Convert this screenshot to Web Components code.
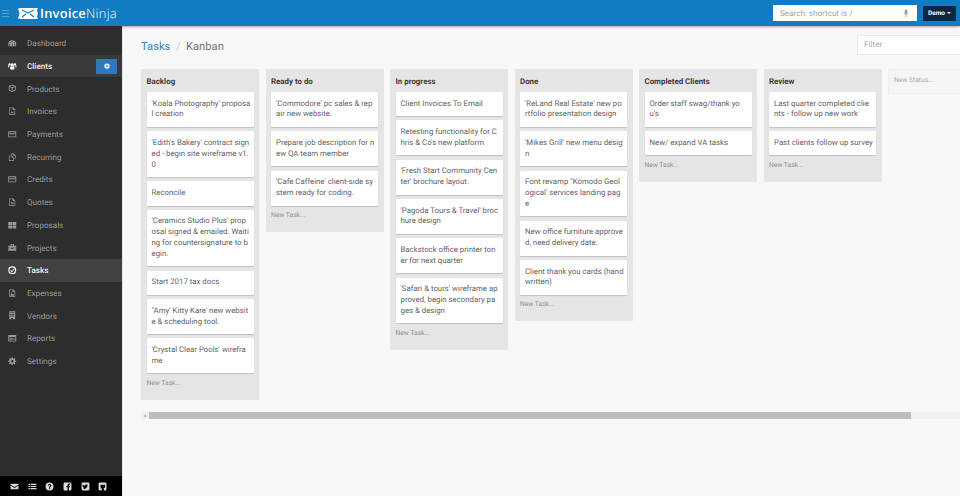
<!DOCTYPE html>
<html lang="en">
<head>
<meta charset="utf-8">
<title>Tasks / Kanban</title>
<style>
  html, body { margin: 0; height: 100%; overflow: hidden; }
  body { font-family: Roboto, "Liberation Sans", sans-serif; background: #f8f8f8; text-rendering: geometricPrecision; }
</style>
</head>
<body>
<app-shell>
  <app-header slot="header"></app-header>
  <side-nav slot="nav">
    <nav-item icon="dashboard">Dashboard</nav-item>
    <nav-item icon="clients" active add>Clients</nav-item>
    <nav-item icon="products">Products</nav-item>
    <nav-item icon="invoices">Invoices</nav-item>
    <nav-item icon="card">Payments</nav-item>
    <nav-item icon="recurring">Recurring</nav-item>
    <nav-item icon="card">Credits</nav-item>
    <nav-item icon="quotes">Quotes</nav-item>
    <nav-item icon="proposals">Proposals</nav-item>
    <nav-item icon="projects">Projects</nav-item>
    <nav-item icon="tasks" current>Tasks</nav-item>
    <nav-item icon="expenses">Expenses</nav-item>
    <nav-item icon="vendors">Vendors</nav-item>
    <nav-item icon="reports">Reports</nav-item>
    <nav-item icon="settings">Settings</nav-item>
  </side-nav>
  <kanban-page>
    <kanban-column name="Backlog">
      <task-card>'Koala Photography' proposa<br>l creation</task-card>
      <task-card>'Edith's Bakery' contract sign<br>ed - begin site wireframe v1.<br>0</task-card>
      <task-card>Reconcile</task-card>
      <task-card>'Ceramics Studio Plus' prop<br>osal signed &amp; emailed. Waiti<br>ng for countersignature to b<br>egin.</task-card>
      <task-card>Start 2017 tax docs</task-card>
      <task-card>"Amy' Kitty Kare' new websit<br>e &amp; scheduling tool.</task-card>
      <task-card>'Crystal Clear Pools' wirefra<br>me</task-card>
    </kanban-column>
    <kanban-column name="Ready to do">
      <task-card>'Commodore' pc sales &amp; rep<br>air new website.</task-card>
      <task-card>Prepare job description for n<br>ew QA team member</task-card>
      <task-card>'Cafe Caffeine' client-side sy<br>stem ready for coding.</task-card>
    </kanban-column>
    <kanban-column name="In progress">
      <task-card>Client Invoices To Email</task-card>
      <task-card>Retesting functionality for C<br>hris &amp; Co's new platform</task-card>
      <task-card>'Fresh Start Community Cen<br>ter' brochure layout.</task-card>
      <task-card>'Pagoda Tours &amp; Travel' broc<br>hure design</task-card>
      <task-card>Backstock office printer ton<br>er for next quarter</task-card>
      <task-card>'Safari &amp; tours' wireframe ap<br>proved, begin secondary pa<br>ges &amp; design</task-card>
    </kanban-column>
    <kanban-column name="Done">
      <task-card>'ReLand Real Estate' new po<br>rtfolio presentation design</task-card>
      <task-card>'Mikes Grill' new menu desig<br>n</task-card>
      <task-card>Font revamp "Komodo Geol<br>ogical' services landing pag<br>e</task-card>
      <task-card>New office furniture approve<br>d, need delivery date.</task-card>
      <task-card>Client thank you cards (hand<br>written)</task-card>
    </kanban-column>
    <kanban-column name="Completed Clients">
      <task-card>Order staff swag/thank yo<br>u's</task-card>
      <task-card>New/ expand VA tasks</task-card>
    </kanban-column>
    <kanban-column name="Review">
      <task-card>Last quarter completed clie<br>nts - follow up new work</task-card>
      <task-card>Past clients follow up survey</task-card>
    </kanban-column>
    <new-status></new-status>
  </kanban-page>
</app-shell>

<script>
// icon paths, drawn on a 16x16 box
const ICONS = {
  dashboard: '<path d="M8 2.500a7.500 7.500 0 0 0-7.500 7.500c0 1.300.3 2.500.9 3.500h13.200c.6-1 .9-2.200.9-3.500A7.500 7.500 0 0 0 8 2.500zM8 4a1 1 0 1 1 0 2 1 1 0 0 1 0-2zM4 6a1 1 0 1 1 0 2 1 1 0 0 1 0-2zM12 6a1 1 0 1 1 0 2 1 1 0 0 1 0-2zM3 10a1 1 0 1 1 0 2 1 1 0 0 1 0-2zM13 10a1 1 0 1 1 0 2 1 1 0 0 1 0-2zM7.200 12.500l.8-5 .8 5z" fill-rule="evenodd"/>',
  clients: '<circle cx="8" cy="5.500" r="3"/><circle cx="3" cy="4.500" r="2.200"/><circle cx="13" cy="4.500" r="2.200"/><path d="M4 10c0-1.200.9-2 1.800-2 .6.500 1.400.9 2.200.9s1.600-.4 2.200-.9c.9 0 1.800.8 1.800 2v2.800c0 .7-.5 1.200-1.200 1.200H5.200c-.7 0-1.200-.5-1.200-1.200z"/><path d="M0 7.300c0-.6.500-1 1-1 .6.500 1.300.7 2 .6-.2.400-.3 1-.4 1.300-.5.300-.9 1-1.100 1.800H1c-.6 0-1-.4-1-1zM16 7.300c0-.6-.5-1-1-1-.6.500-1.300.7-2 .6.200.4.300 1 .4 1.300.5.300.9 1 1.100 1.800h.5c.6 0 1-.4 1-1z"/>',
  products: '<path d="M8 1 14.500 3.800v8.400L8 15l-6.500-2.800V3.800zM8 2.800 4 4.400 8 6l4-1.600zM3 5.800v5.400l4.200 1.800V7.500zM8.800 7.500V13l4.200-1.800V5.800z" fill-rule="evenodd"/>',
  invoices: '<path d="M2.500 1h7.500l3.500 3.500V15h-11zM3.800 2.300v11.400h8.400V5.500H9V2.300zM10.200 2.800v1.500h1.500zM6 7h1.500c.2 1.700.8 2.800 1.700 3.500.6 0 1.400 0 1.600.4v.6c-.7.200-1.600 0-2.300-.4-.8.100-1.600.4-2.300.7-.4.700-.9 1.200-1.300 1-.5-.2 0-1.200 1.200-1.700.4-.7.700-1.400.9-2.200-.4-.8-.6-1.400 0-1.900z" fill-rule="evenodd"/>',
  card: '<path d="M.5 2.500h15v11H.5zM2 4v2h12V4zM2 8v4h12V8z" fill-rule="evenodd"/>',
  recurring: '<path d="M6 1h5l3.500 3.500v6H11V15H1.500V5H6zM7.300 2.300v3.200h1.200L11 8v1.300h2.200V5.200H10V2.300zM2.800 6.300v7.500h6.900V8.500H7V6.300z" fill-rule="evenodd"/>',
  quotes: '<path d="M2.500 1h7.500l3.500 3.500V15h-11zM3.800 2.300v11.400h8.400V5.500H9V2.300zM5.500 8h5v1.200h-5zM5.500 10.500h5v1.200h-5zM10.200 2.800v1.500h1.500z" fill-rule="evenodd"/>',
  proposals: '<path d="M.5 2h7v5.500h-7zM8.500 2h7v5.500h-7zM.5 8.500h7V14h-7zM8.500 8.500h7V14h-7z"/>',
  projects: '<path d="M5 2h6v3h4.500v3.800H.5V5H5zM6.500 3.400V5h3V3.400zM.5 9.800h6v1.400h3V9.800h6V14.500H.5z" fill-rule="evenodd"/>',
  tasks: '<path d="M8 .5a7.500 7.500 0 1 1 0 15 7.500 7.500 0 0 1 0-15zm0 2.200a5.300 5.300 0 1 0 0 10.600A5.300 5.300 0 0 0 8 2.700zm3.500 2.500 1.100 1.100L7.300 11.600 4.500 8.800l1.100-1.100 1.700 1.700z" fill-rule="evenodd"/>',
  expenses: '<path d="M2.500 1h7.500l3.500 3.500V15h-11zM3.800 2.300v11.400h8.400V5.500H9V2.300zM5 12.500V10l1.800-1.600 1.600 1.600 1-.9 1.600 1.400v2zM6 6a1 1 0 1 1 0 2 1 1 0 0 1 0-2z" fill-rule="evenodd"/>',
  vendors: '<path d="M2.500 .5h11v15H9.500v-2.500h-3v2.500h-4zM4.500 2.500v1.800h1.800V2.500zM7.100 2.500v1.800h1.800V2.500zM9.700 2.500v1.800h1.800V2.500zM4.500 5.500v1.800h1.800V5.500zM7.100 5.500v1.800h1.800V5.500zM9.700 5.500v1.800h1.800V5.500zM4.500 8.500v1.800h1.800V8.500zM7.100 8.500v1.800h1.800V8.500zM9.700 8.500v1.800h1.800V8.500z" fill-rule="evenodd"/>',
  reports: '<path d="M.5 2h15v12H.5zM2 5.500v1.900h3.200V5.500zM6.200 5.500v1.900H14V5.500zM2 8.400v1.800h3.200V8.400zM6.200 8.400v1.800H14V8.400zM2 11.200v1.300h3.200v-1.300zM6.200 11.200v1.300H14v-1.300z" fill-rule="evenodd"/>',
  settings: '<path d="M7 .5h2l.4 2.200 1.400.6 1.800-1.300 1.400 1.400-1.300 1.800.6 1.400 2.200.4v2l-2.200.4-.6 1.400 1.300 1.800-1.400 1.400-1.800-1.300-1.400.6L9 15.500H7l-.4-2.200-1.400-.6-1.800 1.300L2 12.600l1.300-1.800-.6-1.400L.5 9V7l2.200-.4.6-1.400L2 3.400 3.400 2l1.800 1.300 1.400-.6zM8 5.800a2.200 2.200 0 1 0 0 4.400 2.200 2.200 0 0 0 0-4.400z" fill-rule="evenodd"/>',
  mail: '<path d="M1 3h14v1.800L8 9 1 4.800zM1 6.300l7 4.200 7-4.200V13H1z"/>',
  list: '<path d="M1 3h2.500v2.200H1zM4.500 3H15v2.200H4.500zM1 6.900h2.500v2.200H1zM4.500 6.900H15v2.200H4.500zM1 10.800h2.500V13H1zM4.500 10.800H15V13H4.500z"/>',
  help: '<path d="M8 1a7 7 0 1 1 0 14A7 7 0 0 1 8 1zM7 11v2h2v-2zM8 3.500c-1.700 0-2.800 1-3 2.500l1.800.3c.1-.7.500-1.100 1.200-1.100s1.100.4 1.100.9c0 1.100-2.100 1.100-2.100 3.400V10h2v-.3c0-1.300 2.100-1.500 2.100-3.700 0-1.500-1.300-2.500-3.100-2.500z" fill-rule="evenodd"/>',
  facebook: '<path d="M3 1h10a2 2 0 0 1 2 2v10a2 2 0 0 1-2 2h-2.500V9.500h2l.3-2.300h-2.300V5.800c0-.7.200-1.100 1.100-1.100h1.300V2.600c-.3 0-1-.1-1.800-.1-1.800 0-3 1.100-3 3.100v1.600h-2v2.300h2V15H3a2 2 0 0 1-2-2V3a2 2 0 0 1 2-2z"/>',
  twitter: '<path d="M3 1h10a2 2 0 0 1 2 2v10a2 2 0 0 1-2 2H3a2 2 0 0 1-2-2V3a2 2 0 0 1 2-2zm9.500 4.200c-.4.200-.8.300-1.200.3.400-.3.800-.7.900-1.200-.4.200-.9.400-1.300.5a2.100 2.100 0 0 0-3.600 1.900c-1.700-.1-3.200-.9-4.300-2.200-.6 1-.3 2.200.6 2.800-.3 0-.7-.1-1-.3 0 1 .7 1.900 1.700 2.100-.3.100-.6.100-.9 0 .3.900 1.100 1.400 2 1.500-.9.700-2 1-3 .9 3.800 2.200 9-.1 8.900-5.200.5-.3.900-.7 1.200-1.100z" fill-rule="evenodd"/>',
  github: '<path d="M3 1h10a2 2 0 0 1 2 2v10a2 2 0 0 1-2 2h-2.600v-2.500c0-.7-.2-1.100-.5-1.400 1.600-.2 2.900-.9 2.900-3.100 0-.7-.2-1.200-.6-1.700.1-.3.200-.9-.1-1.700-.5-.1-1.300.3-1.800.7a7 7 0 0 0-3.600 0c-.5-.4-1.300-.8-1.800-.7-.3.800-.2 1.400-.1 1.700-.4.500-.6 1-.6 1.700 0 2.200 1.300 2.900 2.900 3.100-.2.200-.4.500-.5.900-.6.300-1.500.3-1.900-.6-.3-.4-.7-.5-1-.4.500.4.600 1.500 2.900 1.300V15H3a2 2 0 0 1-2-2V3a2 2 0 0 1 2-2z"/>',
  mic: '<path d="M8 1a2.500 2.500 0 0 1 2.500 2.500v4a2.500 2.500 0 0 1-5 0v-4A2.500 2.500 0 0 1 8 1zM3.500 6.500h1v1a3.500 3.500 0 0 0 7 0v-1h1v1a4.500 4.500 0 0 1-4 4.500v1.800h2V15h-5v-1.200h2V12a4.500 4.500 0 0 1-4-4.500z"/>',
  plus: '<path d="M8 1a7 7 0 1 1 0 14A7 7 0 0 1 8 1zM7 4v3H4v2h3v3h2V9h3V7H9V4z" fill-rule="evenodd"/>'
};
const icon = (name, size) =>
  `<svg viewBox="0 0 16 16" width="${size}" height="${size}" fill="currentColor" aria-hidden="true">${ICONS[name]}</svg>`;

class AppShell extends HTMLElement {
  connectedCallback() {
    this.attachShadow({ mode: 'open' });
    this.shadowRoot.innerHTML = `
      <style>
        :host { display: grid; grid-template-columns: 122px 1fr; grid-template-rows: 26px 1fr; height: 496px; overflow: hidden; }
        .top { grid-column: 1 / 3; position: relative; z-index: 2; }
        .main { min-width: 0; overflow: hidden; border-left: 1px solid #e6e6e6; }
      </style>
      <div class="top"><slot name="header"></slot></div>
      <slot name="nav"></slot>
      <div class="main"><slot></slot></div>
    `;
  }
}

class AppHeader extends HTMLElement {
  connectedCallback() {
    this.attachShadow({ mode: 'open' });
    this.shadowRoot.innerHTML = `
      <style>
        :host { display: flex; align-items: center; height: 26px; background: #117cc1; box-shadow: 0 1px 2px rgba(60,40,30,.4); padding: 0 4px 0 2px; }
        .burger { width: 7px; height: 7px; margin-right: 9px; border-top: 1px solid #5f9fb8; border-bottom: 1px solid #5f9fb8; position: relative; box-sizing: border-box; }
        .burger::after { content: ""; position: absolute; left: 0; right: 0; top: 2px; height: 1px; background: #5f9fb8; }
        .logo { display: flex; align-items: center; gap: 2px; color: #fff; flex: 1; font: 12.900px/26px "Open Sans", sans-serif; letter-spacing: .25px; }
        .logo b { font-weight: 600; }
        .logo span { font-weight: 300; }
        .search { width: 144px; height: 16px; box-sizing: border-box; background: #fff; display: flex; align-items: center; justify-content: space-between; padding: 0 7px; color: #a2a2a2; font: 8.100px Roboto, sans-serif; margin-right: 6px; }
        .search svg { color: #999; }
        .demo { width: 33px; height: 15px; background: #0b2742; color: #fff; border-radius: 1px; display: flex; align-items: center; justify-content: center; gap: 2px; font: 700 6.500px Roboto, sans-serif; }
        .demo i { border: 2px solid transparent; border-top-color: #fff; border-bottom: 0; }
      </style>
      <div class="burger"></div>
      <div class="logo">
        <svg viewBox="0 0 20 11" width="20" height="11" fill="#fff">
          <path d="M0 .5 3 0h15l2 0-1 2 .8 3.500-.8 3.500 1 2H3L0 10.500 1.500 5.500z"/>
          <path d="M4 2 10 5l6-3M4 9l4-3M16 9l-4-3" fill="none" stroke="#117cc1" stroke-width="1.100"/>
        </svg>
        <div><b>Invoice</b><span>Ninja</span></div>
      </div>
      <div class="search">Search: shortcut is /${icon('mic', 8)}</div>
      <div class="demo">Demo<i></i></div>
    `;
  }
}

class SideNav extends HTMLElement {
  connectedCallback() {
    this.attachShadow({ mode: 'open' });
    const foot = ['mail', 'list', 'help', 'facebook', 'twitter', 'github'].map(n => icon(n, 9)).join('');
    this.shadowRoot.innerHTML = `
      <style>
        :host { display: flex; flex-direction: column; background: #2d2d2d; min-height: 0; }
        .items { flex: 1; padding-top: 6px; }
        .foot { height: 20px; flex: none; background: #000; color: #dcdcdc; display: flex; align-items: center; gap: 8.700px; padding-left: 10px; }
      </style>
      <div class="items"><slot></slot></div>
      <div class="foot">${foot}</div>
    `;
  }
}

class NavItem extends HTMLElement {
  connectedCallback() {
    this.attachShadow({ mode: 'open' });
    const on = this.hasAttribute('active') || this.hasAttribute('current');
    const bg = this.hasAttribute('current') ? '#414141' : this.hasAttribute('active') ? '#3a3a3a' : 'transparent';
    this.shadowRoot.innerHTML = `
      <style>
        :host { display: flex; align-items: center; height: 22.700px; padding-left: 8px; background: ${bg}; color: ${on ? '#f0f0f0' : '#9c9c9c'}; font: ${on ? 500 : 400} 8.100px Roboto, sans-serif; }
        svg { color: ${on ? '#fff' : '#9a9a9a'}; margin-right: 10.500px; flex: none; }
        .label { flex: 1; }
        .add { width: 21px; height: 15px; margin-right: 5px; background: #2f78bd; color: #fff; display: flex; align-items: center; justify-content: center; }
        .add svg { margin: 0; color: #fff; }
      </style>
      ${icon(this.getAttribute('icon'), 8.500)}
      <span class="label"><slot></slot></span>
      ${this.hasAttribute('add') ? `<span class="add">${icon('plus', 6)}</span>` : ''}
    `;
  }
}

class KanbanPage extends HTMLElement {
  connectedCallback() {
    this.attachShadow({ mode: 'open' });
    this.shadowRoot.innerHTML = `
      <style>
        :host { display: block; padding-top: 9px; color: #777; }
        .bar { display: flex; align-items: center; height: 20px; padding-left: 18px; font: 400 11.200px Roboto, sans-serif; }
        .crumbs { padding-top: 3px; }
        .bar a { color: #3d7fb8; text-decoration: none; }
        .bar .sep { color: #ccc; margin: 0 5.500px; }
        .filter { margin-left: auto; flex: none; width: 120px; margin-right: -17px; height: 20px; box-sizing: border-box; background: #fff; border: 1px solid #eaeaea; color: #a8a8a8; font-size: 8.200px; line-height: 18px; padding-left: 6px; }
        .board { display: flex; align-items: flex-start; gap: 6.500px; margin-top: 14px; padding-left: 18px; height: 343px; overflow: hidden; }
        .scroll { margin-left: 18px; height: 7px; background: #f1f1f1; display: flex; align-items: center; }
        .arrow { width: 8px; text-align: center; color: #777; font-size: 4px; }
        .thumb { width: 762px; height: 7px; background: #bdbdbd; }
      </style>
      <div class="bar"><div class="crumbs"><a>Tasks</a><span class="sep">/</span><span>Kanban</span></div><div class="filter">Filter</div></div>
      <div class="board"><slot></slot></div>
      <div class="scroll"><span class="arrow">◂</span><div class="thumb"></div></div>
    `;
  }
}

class KanbanColumn extends HTMLElement {
  connectedCallback() {
    this.attachShadow({ mode: 'open' });
    this.shadowRoot.innerHTML = `
      <style>
        :host { display: block; flex: none; width: 118px; box-sizing: border-box; background: #e5e5e5; border-radius: 1px; padding: 0 5.500px 12px 5.500px; }
        h3 { margin: 0; height: 23px; font: 700 7.900px/25px Roboto, sans-serif; color: #3c3c3c; }
        .cards { display: flex; flex-direction: column; gap: 4.300px; }
        .new { height: 9px; margin-top: 5.500px; font-size: 6.700px; line-height: 9px; color: #8d8d8d; }
      </style>
      <h3>${this.getAttribute('name')}</h3>
      <div class="cards"><slot></slot></div>
      <div class="new">New Task...</div>
    `;
  }
}

class TaskCard extends HTMLElement {
  connectedCallback() {
    this.attachShadow({ mode: 'open' });
    this.shadowRoot.innerHTML = `
      <style>
        /* breaks fall mid-word in the cards, so they are set by hand in the markup */
        :host { display: block; background: #fff; border-radius: 1px; box-shadow: 0 1px 1px rgba(0,0,0,.16); padding: 6.700px 1px 6.700px 5px; font: 400 7.800px/10.800px Roboto, sans-serif; color: #5f5f5f; white-space: nowrap; }
      </style>
      <slot></slot>
    `;
  }
}

class NewStatus extends HTMLElement {
  connectedCallback() {
    this.attachShadow({ mode: 'open' });
    this.shadowRoot.innerHTML = `
      <style>
        :host { display: block; flex: none; width: 90px; height: 25px; box-sizing: border-box; background: #f5f5f5; border: 1px solid #eeeeee; padding-left: 5px; font: 6.700px/21px Roboto, sans-serif; color: #a5a5a5; }
      </style>
      New Status...
    `;
  }
}

customElements.define('app-shell', AppShell);
customElements.define('app-header', AppHeader);
customElements.define('side-nav', SideNav);
customElements.define('nav-item', NavItem);
customElements.define('kanban-page', KanbanPage);
customElements.define('kanban-column', KanbanColumn);
customElements.define('task-card', TaskCard);
customElements.define('new-status', NewStatus);
</script>
</body>
</html>
